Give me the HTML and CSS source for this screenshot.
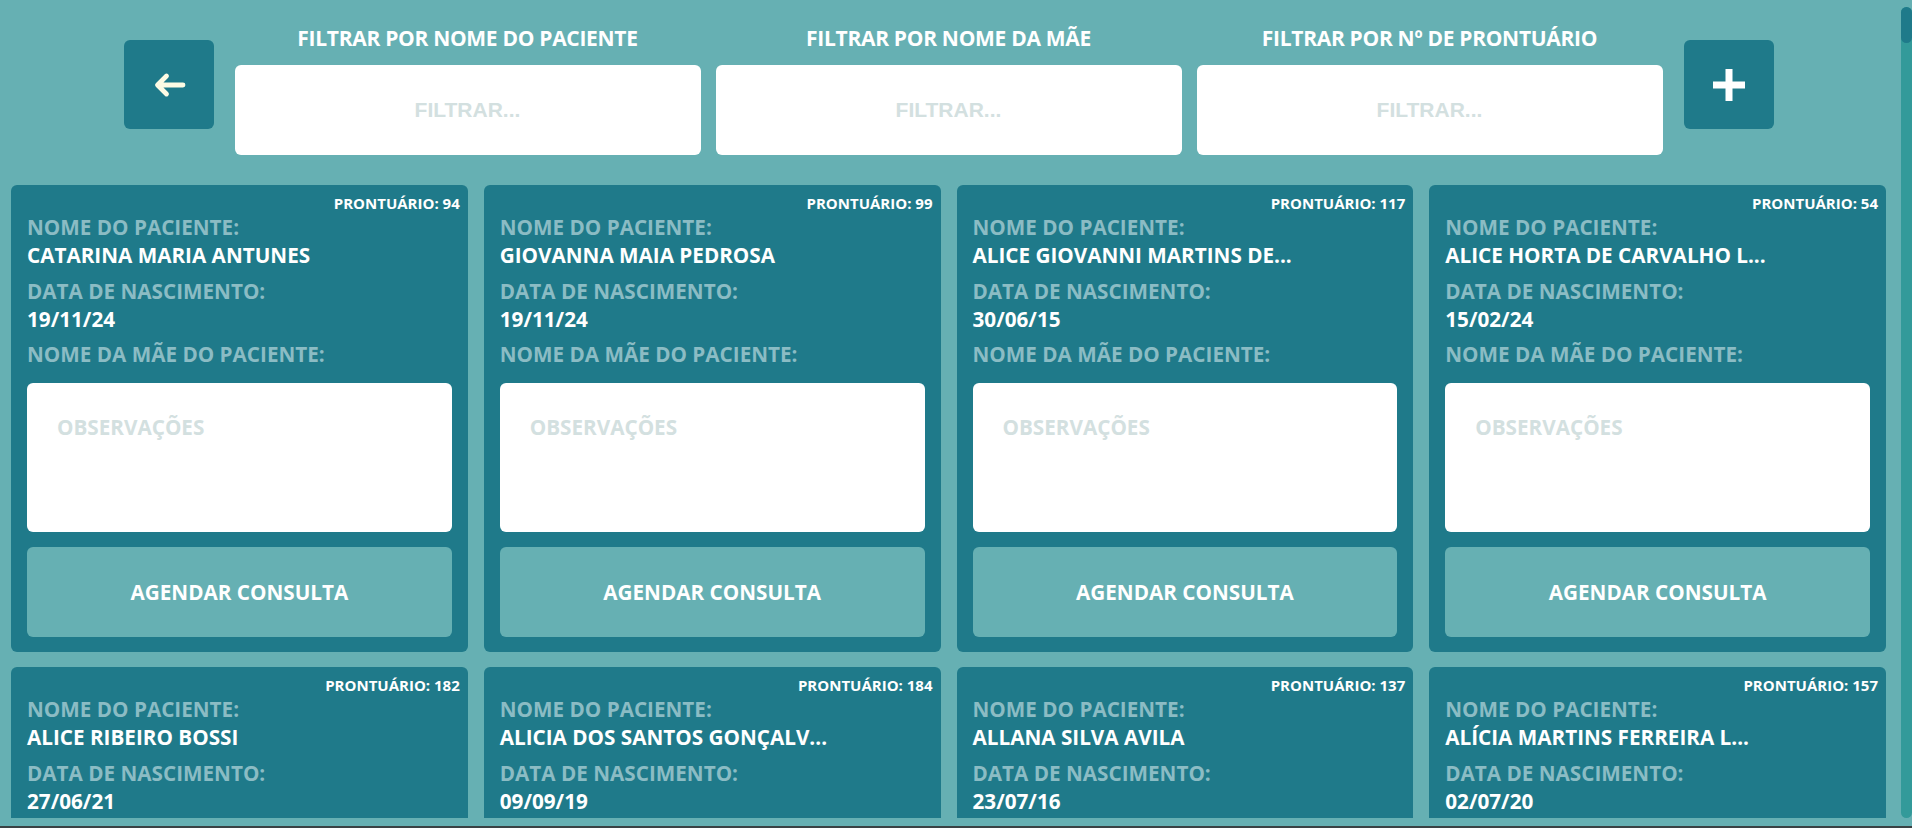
FILE: index.html
```html
<!DOCTYPE html>
<html lang="pt-BR">
<head>
<meta charset="utf-8">
<title>Pacientes</title>
<link rel="stylesheet" href="styles.css">
</head>
<body>
<div class="app">
  <div class="viewport">
    <main class="scroll">
      <header class="toolbar">
        <button class="icon-btn back" aria-label="Voltar">
          <svg width="34" height="26" viewBox="0 0 34 26"><path d="M31 13 H6 M14.5 4 L5.5 13 L14.5 22" fill="none" stroke="#fdfbe4" stroke-width="4.8" stroke-linecap="round" stroke-linejoin="round"/></svg>
        </button>
        <div class="filter">
          <label class="filter-label">FILTRAR POR NOME DO PACIENTE</label>
          <input class="filter-input" placeholder="FILTRAR...">
        </div>
        <div class="filter">
          <label class="filter-label">FILTRAR POR NOME DA MÃE</label>
          <input class="filter-input" placeholder="FILTRAR...">
        </div>
        <div class="filter">
          <label class="filter-label">FILTRAR POR Nº DE PRONTUÁRIO</label>
          <input class="filter-input" placeholder="FILTRAR...">
        </div>
        <button class="icon-btn add" aria-label="Adicionar">
          <svg width="32" height="32" viewBox="0 0 32 32"><rect x="12.5" y="0" width="7" height="32" fill="#fff"/><rect x="0" y="12.5" width="32" height="7" fill="#fff"/></svg>
        </button>
      </header>

      <section class="grid">
        <article class="card">
          <div class="record">PRONTUÁRIO: 94</div>
          <div class="field"><div class="label">NOME DO PACIENTE:</div><div class="value">CATARINA MARIA ANTUNES</div></div>
          <div class="field"><div class="label">DATA DE NASCIMENTO:</div><div class="value">19/11/24</div></div>
          <div class="field"><div class="label">NOME DA MÃE DO PACIENTE:</div><div class="value"></div></div>
          <textarea class="notes" placeholder="OBSERVAÇÕES"></textarea>
          <button class="schedule">AGENDAR CONSULTA</button>
        </article>
        <article class="card">
          <div class="record">PRONTUÁRIO: 99</div>
          <div class="field"><div class="label">NOME DO PACIENTE:</div><div class="value">GIOVANNA MAIA PEDROSA</div></div>
          <div class="field"><div class="label">DATA DE NASCIMENTO:</div><div class="value">19/11/24</div></div>
          <div class="field"><div class="label">NOME DA MÃE DO PACIENTE:</div><div class="value"></div></div>
          <textarea class="notes" placeholder="OBSERVAÇÕES"></textarea>
          <button class="schedule">AGENDAR CONSULTA</button>
        </article>
        <article class="card">
          <div class="record">PRONTUÁRIO: 117</div>
          <div class="field"><div class="label">NOME DO PACIENTE:</div><div class="value">ALICE GIOVANNI MARTINS DE...</div></div>
          <div class="field"><div class="label">DATA DE NASCIMENTO:</div><div class="value">30/06/15</div></div>
          <div class="field"><div class="label">NOME DA MÃE DO PACIENTE:</div><div class="value"></div></div>
          <textarea class="notes" placeholder="OBSERVAÇÕES"></textarea>
          <button class="schedule">AGENDAR CONSULTA</button>
        </article>
        <article class="card">
          <div class="record">PRONTUÁRIO: 54</div>
          <div class="field"><div class="label">NOME DO PACIENTE:</div><div class="value">ALICE HORTA DE CARVALHO L...</div></div>
          <div class="field"><div class="label">DATA DE NASCIMENTO:</div><div class="value">15/02/24</div></div>
          <div class="field"><div class="label">NOME DA MÃE DO PACIENTE:</div><div class="value"></div></div>
          <textarea class="notes" placeholder="OBSERVAÇÕES"></textarea>
          <button class="schedule">AGENDAR CONSULTA</button>
        </article>
        <article class="card">
          <div class="record">PRONTUÁRIO: 182</div>
          <div class="field"><div class="label">NOME DO PACIENTE:</div><div class="value">ALICE RIBEIRO BOSSI</div></div>
          <div class="field"><div class="label">DATA DE NASCIMENTO:</div><div class="value">27/06/21</div></div>
          <div class="field"><div class="label">NOME DA MÃE DO PACIENTE:</div><div class="value"></div></div>
          <textarea class="notes" placeholder="OBSERVAÇÕES"></textarea>
          <button class="schedule">AGENDAR CONSULTA</button>
        </article>
        <article class="card">
          <div class="record">PRONTUÁRIO: 184</div>
          <div class="field"><div class="label">NOME DO PACIENTE:</div><div class="value">ALICIA DOS SANTOS GONÇALV...</div></div>
          <div class="field"><div class="label">DATA DE NASCIMENTO:</div><div class="value">09/09/19</div></div>
          <div class="field"><div class="label">NOME DA MÃE DO PACIENTE:</div><div class="value"></div></div>
          <textarea class="notes" placeholder="OBSERVAÇÕES"></textarea>
          <button class="schedule">AGENDAR CONSULTA</button>
        </article>
        <article class="card">
          <div class="record">PRONTUÁRIO: 137</div>
          <div class="field"><div class="label">NOME DO PACIENTE:</div><div class="value">ALLANA SILVA AVILA</div></div>
          <div class="field"><div class="label">DATA DE NASCIMENTO:</div><div class="value">23/07/16</div></div>
          <div class="field"><div class="label">NOME DA MÃE DO PACIENTE:</div><div class="value"></div></div>
          <textarea class="notes" placeholder="OBSERVAÇÕES"></textarea>
          <button class="schedule">AGENDAR CONSULTA</button>
        </article>
        <article class="card">
          <div class="record">PRONTUÁRIO: 157</div>
          <div class="field"><div class="label">NOME DO PACIENTE:</div><div class="value">ALÍCIA MARTINS FERREIRA L...</div></div>
          <div class="field"><div class="label">DATA DE NASCIMENTO:</div><div class="value">02/07/20</div></div>
          <div class="field"><div class="label">NOME DA MÃE DO PACIENTE:</div><div class="value"></div></div>
          <textarea class="notes" placeholder="OBSERVAÇÕES"></textarea>
          <button class="schedule">AGENDAR CONSULTA</button>
        </article>
      </section>
    </main>
    <div class="scrollbar"><div class="thumb"></div></div>
  </div>
  <div class="under"></div>
  <div class="bottom-strip"></div>
</div>
</body>
</html>
```

FILE: styles.css
```css
* { box-sizing: border-box; }

html, body {
  margin: 0;
  padding: 0;
  height: 828px;
  overflow: hidden;
  background: #66b0b3;
}

body {
  font-family: "Open Sans", "Noto Sans", sans-serif;
}

.app {
  height: 828px;
  display: flex;
  flex-direction: column;
}

.viewport {
  margin-top: 7px;
  height: 811px;
  flex: none;
  display: flex;
}

.scroll {
  flex: 1;
  min-width: 0;
  overflow: hidden;
  margin-top: -7px;
}

.scrollbar {
  width: 11px;
  flex: none;
  background: #339a9a;
  border-radius: 6px;
}

.thumb {
  height: 36px;
  border-radius: 6px;
  background: #1f7a8a;
}

.under {
  height: 8px;
  flex: none;
}

.bottom-strip {
  height: 2px;
  flex: none;
  background: #3a4244;
}

/* toolbar */
.toolbar {
  display: flex;
  justify-content: center;
  align-items: flex-start;
  gap: 15px;
  padding: 26px 4px 0 0;
}

.icon-btn {
  width: 90px;
  height: 89px;
  margin-top: 14px;
  border: none;
  border-radius: 6px;
  background: #1f7a8a;
  display: flex;
  align-items: center;
  justify-content: center;
  padding: 0;
}
.icon-btn.back { margin-right: 6px; }
.icon-btn.add { margin-left: 6px; }

.filter {
  width: 466px;
  display: flex;
  flex-direction: column;
  align-items: center;
}

.filter-label {
  font-family: "Open Sans", "Noto Sans", sans-serif;
  font-weight: 700;
  font-size: 21px;
  line-height: 24px;
  letter-spacing: -0.3px;
  color: #ffffff;
  margin-bottom: 15px;
  white-space: nowrap;
}

.filter-input {
  width: 466px;
  height: 90px;
  border: none;
  border-radius: 6px;
  background: #ffffff;
  text-align: center;
  font-family: "Liberation Sans", Arial, sans-serif;
  font-weight: 700;
  font-size: 21px;
  color: #2a6f7a;
  padding: 0;
  outline: none;
}
.filter-input::placeholder {
  color: #d3e0e0;
}

/* grid */
.grid {
  display: grid;
  grid-template-columns: repeat(4, 1fr);
  column-gap: 16px;
  row-gap: 15px;
  padding: 0 15px 0 11px;
  margin-top: 30px;
}

.card {
  background: #1f7a8a;
  border-radius: 6px;
  padding: 8px 16px 15px 16px;
  display: flex;
  flex-direction: column;
}

.record {
  text-align: right;
  margin-right: -8px;
  font-weight: 700;
  font-size: 15px;
  line-height: 20px;
  color: #ffffff;
}

.field + .field {
  margin-top: 7.5px;
}

.label {
  font-weight: 700;
  font-size: 20.7px;
  line-height: 28px;
  color: #8bbcc4;
  white-space: nowrap;
}

.value {
  font-weight: 700;
  font-size: 20.7px;
  line-height: 28px;
  color: #ffffff;
  white-space: nowrap;
}
.value:empty {
  height: 0;
}

.notes {
  margin-top: 15px;
  height: 149px;
  width: 100%;
  border: none;
  border-radius: 6px;
  background: #ffffff;
  resize: none;
  padding: 30px;
  font-family: "Open Sans", "Noto Sans", sans-serif;
  font-weight: 700;
  font-size: 20.7px;
  line-height: 28px;
  color: #1f7a8a;
  outline: none;
}
.notes::placeholder {
  color: #d3e0e0;
}

.schedule {
  margin-top: 15px;
  height: 90px;
  width: 100%;
  border: none;
  border-radius: 6px;
  background: #66b0b3;
  color: #ffffff;
  font-family: "Open Sans", "Noto Sans", sans-serif;
  font-weight: 700;
  font-size: 20.7px;
  padding: 0;
}
```
